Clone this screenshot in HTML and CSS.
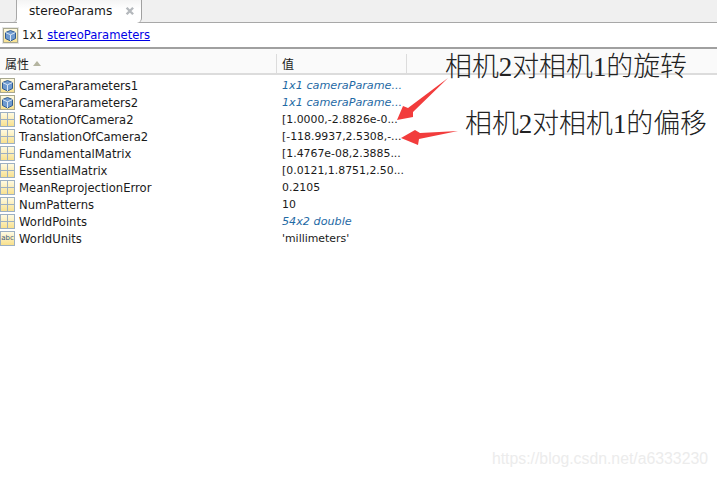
FILE: index.html
```html
<!DOCTYPE html>
<html lang="zh">
<head>
  <meta charset="UTF-8" />
  <title>stereoParams</title>
  <link rel="stylesheet" href="styles.css">
</head>
<body>
  <svg width="0" height="0" class="defs">
    <defs>
      <linearGradient id="cell" x1="0" y1="0" x2="0" y2="1">
        <stop offset="0" stop-color="#fffbe4"/>
        <stop offset="1" stop-color="#f8e08c"/>
      </linearGradient>
      <symbol id="grid" viewBox="0 0 15 15">
        <rect x="0.5" y="0.5" width="14" height="14" fill="url(#cell)" stroke="#9db0c2"/>
        <path d="M7.5 1V14M1 7.5H14" stroke="#9db0c2" fill="none"/>
      </symbol>
      <symbol id="cube" viewBox="0 0 15 15">
        <rect x="0.5" y="0.5" width="14" height="14" fill="url(#cell)" stroke="#a8a890"/>
        <path d="M7.5 2.5L12.5 4.5V10.5L7.5 13L2.5 10.5V4.5Z" fill="#6f9bd0" stroke="#2f5a90"/>
        <path d="M2.5 4.5L7.5 6.8L12.5 4.5M7.5 6.8V13" fill="none" stroke="#dce8f5"/>
      </symbol>
    </defs>
  </svg>

  <div class="tabstrip">
    <div class="grip"></div>
    <div class="tab">
      <span>stereoParams</span>
      <svg class="close" width="12" height="12" viewBox="0 0 12 12"><path d="M2 2L10 10M10 2L2 10" stroke="#b4b8bc" stroke-width="3"/></svg>
    </div>
  </div>

  <div class="infobar">
    <span class="infoicon"><svg width="15" height="15"><use href="#cube"/></svg></span>
    <span>1x1 <a href="#">stereoParameters</a></span>
  </div>

  <div class="thead">
    <div class="th name">属性 <i class="sort"></i></div>
    <div class="th value">值</div>
    <div class="th rest"></div>
  </div>

  <div class="rows">
    <div class="row"><svg class="ico"><use href="#cube"/></svg><span class="name">CameraParameters1</span><span class="val obj">1x1 cameraParame...</span></div>
    <div class="row"><svg class="ico"><use href="#cube"/></svg><span class="name">CameraParameters2</span><span class="val obj">1x1 cameraParame...</span></div>
    <div class="row"><svg class="ico"><use href="#grid"/></svg><span class="name">RotationOfCamera2</span><span class="val">[1.0000,-2.8826e-0...</span></div>
    <div class="row"><svg class="ico"><use href="#grid"/></svg><span class="name">TranslationOfCamera2</span><span class="val">[-118.9937,2.5308,-...</span></div>
    <div class="row"><svg class="ico"><use href="#grid"/></svg><span class="name">FundamentalMatrix</span><span class="val">[1.4767e-08,2.3885...</span></div>
    <div class="row"><svg class="ico"><use href="#grid"/></svg><span class="name">EssentialMatrix</span><span class="val">[0.0121,1.8751,2.50...</span></div>
    <div class="row"><svg class="ico"><use href="#grid"/></svg><span class="name">MeanReprojectionError</span><span class="val">0.2105</span></div>
    <div class="row"><svg class="ico"><use href="#grid"/></svg><span class="name">NumPatterns</span><span class="val">10</span></div>
    <div class="row"><svg class="ico"><use href="#grid"/></svg><span class="name">WorldPoints</span><span class="val obj">54x2 double</span></div>
    <div class="row"><span class="abc">abc</span><span class="name">WorldUnits</span><span class="val">'millimeters'</span></div>
  </div>

  <div class="note note1">相机2对相机1的旋转</div>
  <div class="note note2">相机2对相机1的偏移</div>
  <svg class="arrows" width="717" height="477" viewBox="0 0 717 477">
    <polygon points="448,78 413,112 413,117 397,120 403,106 408,108" fill="#f23c3c"/>
    <polygon points="458,131 420,133 415,130 401,138 418,145 419,139" fill="#f23c3c"/>
  </svg>
  <div class="watermark">https://blog.csdn.net/a6333230</div>
</body>
</html>
```

FILE: styles.css
```css
body { margin: 0; width: 717px; height: 477px; overflow: hidden; background: #fff; font-family: "DejaVu Sans", "Noto Sans CJK SC", sans-serif; font-size: 11.6px; color: #1a1a1a; position: relative; }
.defs { position: absolute; }

.tabstrip { height: 22px; display: flex; background: #f0f0f0; border-bottom: 1px solid #a8a8a8; }
.grip { width: 16px; border-right: 1px solid #a8a8a8; border-bottom-right-radius: 4px; }
.tab { width: 125px; height: 23px; box-sizing: border-box; display: flex; align-items: center; padding: 0 6px 2px 12px; gap: 13px; background: linear-gradient(#f4f4f4, #fff 40%); border-right: 1px solid #a0a0a0; border-bottom-right-radius: 5px; font-size: 12.2px; }

.infobar { height: 24px; display: flex; align-items: center; gap: 3px; padding-left: 2px; border-bottom: 2px solid #a0a0a0; }
.infoicon { display: flex; padding: 1px; background: #e4e4e4; }
.infobar a { color: #0000e6; }

.thead { height: 26px; display: flex; box-sizing: border-box; padding-top: 5px; border-bottom: 2px solid #dcdcdc; background: #fafafa; }
.th { display: flex; align-items: center; gap: 4px; padding-left: 5px; box-sizing: border-box; border-right: 1px solid #dcdcdc; font-size: 12px; }
.th.name { width: 277px; }
.th.value { width: 130px; }
.th.rest { flex: 1; border-right: none; }
.sort { width: 0; height: 0; border: 4.5px solid transparent; border-top: none; border-bottom: 5px solid #b4b4a0; }

.rows { padding-top: 2px; }
.row { height: 17px; display: flex; align-items: center; }
.ico { width: 15px; height: 15px; flex: none; }
.abc { width: 15px; height: 15px; flex: none; box-sizing: border-box; background: linear-gradient(#fffbe4, #f8e08c); border: 1px solid #9db0c2; color: #3a5a80; font-size: 7px; line-height: 13px; text-align: center; }
.row .name { width: 263px; padding-left: 4px; flex: none; }
.row .val { white-space: nowrap; font-size: 10.9px; }
.row .obj { color: #1f6aa5; font-style: italic; font-size: 11.2px; }

.note { position: absolute; font-family: "Liberation Serif", "Noto Sans CJK SC", serif; font-size: 26.9px; font-weight: 300; line-height: 30px; color: #222; white-space: nowrap; }
.note1 { left: 445px; top: 52px; }
.note2 { left: 465px; top: 109px; }
.arrows { position: absolute; left: 0; top: 0; }
.watermark { position: absolute; right: 9px; top: 450px; font-family: "Liberation Sans", sans-serif; font-size: 15.8px; color: #ececec; }
```
